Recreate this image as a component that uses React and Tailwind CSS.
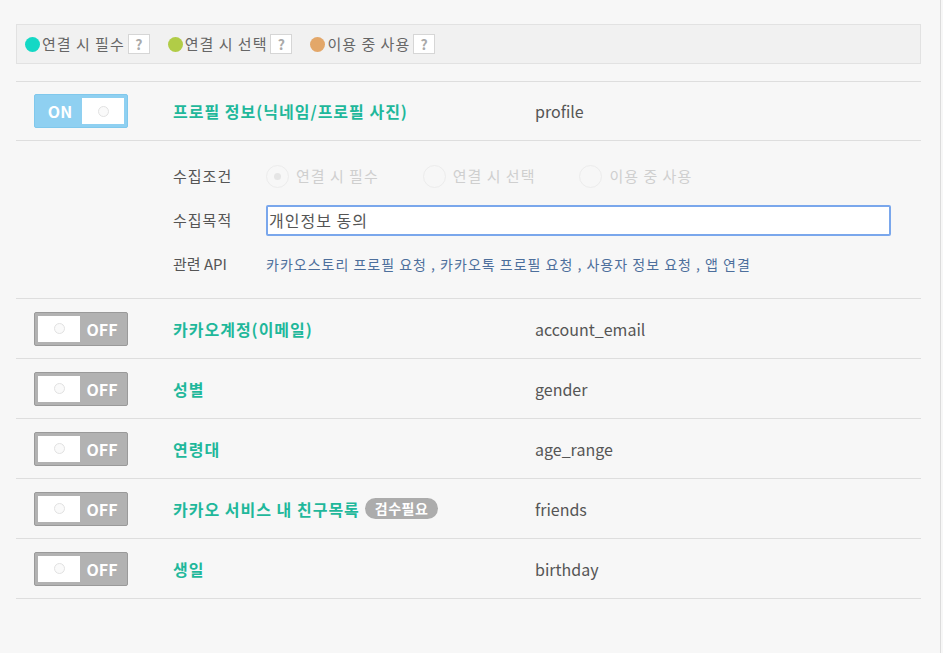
import { useState } from 'react';

const FONT = { fontFamily: '"Noto Sans CJK KR", "Noto Sans", sans-serif' };

const legend = [
  { label: '연결 시 필수', color: 'bg-[#14d8c5]' },
  { label: '연결 시 선택', color: 'bg-[#b1cc47]' },
  { label: '이용 중 사용', color: 'bg-[#e3a769]' },
];

const items = [
  { name: '카카오계정(이메일)', key: 'account_email' },
  { name: '성별', key: 'gender' },
  { name: '연령대', key: 'age_range' },
  { name: '카카오 서비스 내 친구목록', key: 'friends', badge: '검수필요' },
  { name: '생일', key: 'birthday' },
];

function Toggle({ on }) {
  return (
    <div
      className={`flex items-center w-[94px] h-[34px] rounded-[2px] border p-[3px] ${
        on ? 'bg-[#8fd0f1] border-[#80c8ec]' : 'bg-[#b2b2b2] border-[#9a9a9a] flex-row-reverse'
      }`}
    >
      <span className="flex-1 text-center text-white font-bold text-[16px] leading-none">{on ? 'ON' : 'OFF'}</span>
      <span className="w-[42px] h-[26px] bg-white flex items-center justify-center">
        <span className="w-[11px] h-[11px] rounded-full border border-[#e2e2e2] bg-[#fafafa]" />
      </span>
    </div>
  );
}

function Radio({ label, checked }) {
  return (
    <div className="flex items-center gap-[7px] text-[15px] tracking-[1px] text-[#cfcfcf]">
      <span className="w-[23px] h-[23px] rounded-full border border-[#ececec] bg-[#f7f7f7] flex items-center justify-center">
        {checked && <span className="w-[7px] h-[7px] rounded-full bg-[#e5e5e5]" />}
      </span>
      {label}
    </div>
  );
}

export default function App() {
  const [purpose, setPurpose] = useState('개인정보 동의');

  return (
    <div style={FONT} className="min-h-[653px] w-[943px] bg-[#f7f7f7] text-[#555]">
      <div className="w-[941px] min-h-[653px] border-r border-[#dcdcdc] pt-[24px] pl-[16px] pr-[19px]">
        {/* legend */}
        <div className="h-[40px] bg-[#f1f1f1] border border-[#e2e2e2] flex items-center pl-[8px] gap-[18px]">
          {legend.map((l) => (
            <div key={l.label} className="flex items-center">
              <span className={`w-[15px] h-[15px] rounded-full ${l.color}`} />
              <span className="ml-[2px] text-[15px] tracking-[1px] text-[#666]">{l.label}</span>
              <span className="ml-[3px] w-[22px] h-[20px] bg-white border border-[#d6d6d6] flex items-center justify-center text-[14px] font-bold text-[#aaa]">
                ?
              </span>
            </div>
          ))}
        </div>

        <div className="mt-[17px] border-t border-[#dedede]">
          {/* profile row */}
          <div className="h-[59px] flex items-center border-b border-[#dedede]">
            <div className="w-[157px] pl-[18px]">
              <Toggle on />
            </div>
            <div className="w-[362px] text-[16px] tracking-[1px] font-bold text-[#1fb89b]">프로필 정보(닉네임/프로필 사진)</div>
            <div className="text-[16px] text-[#555]">profile</div>
          </div>

          {/* details */}
          <div className="h-[158px] border-b border-[#dedede] pl-[157px] pt-[20px] flex flex-col gap-[14px] text-[15px]">
            <div className="flex items-center h-[30px]">
              <span className="w-[93px] tracking-[1px] text-[#555]">수집조건</span>
              <div className="flex gap-[44px]">
                <Radio label="연결 시 필수" checked />
                <Radio label="연결 시 선택" />
                <Radio label="이용 중 사용" />
              </div>
            </div>
            <div className="flex items-center h-[30px]">
              <span className="w-[93px] tracking-[1px] text-[#555]">수집목적</span>
              <input
                autoFocus
                value={purpose}
                onChange={(e) => setPurpose(e.target.value)}
                className="w-[625px] h-[31px] bg-white border-2 border-[#7aa7ec] rounded-[2px] px-[1px] text-[16px] tracking-[1px] text-[#555] outline-none"
                style={FONT}
              />
            </div>
            <div className="flex items-center h-[30px]">
              <span className="w-[93px] text-[#555]">관련 API</span>
              <span className="text-[14px] tracking-[1px] text-[#4d6f9c]">
                카카오스토리 프로필 요청 , 카카오톡 프로필 요청 , 사용자 정보 요청 , 앱 연결
              </span>
            </div>
          </div>

          {items.map((it) => (
            <div key={it.key} className="h-[60px] flex items-center border-b border-[#dedede]">
              <div className="w-[157px] pl-[18px]">
                <Toggle />
              </div>
              <div className="w-[362px] flex items-center text-[16px] tracking-[1px] font-bold text-[#1fb89b]">
                {it.name}
                {it.badge && (
                  <span className="ml-[5px] h-[21px] px-[10px] rounded-full bg-[#acacac] text-white text-[14px] tracking-[0.5px] font-bold flex items-center">
                    {it.badge}
                  </span>
                )}
              </div>
              <div className="text-[16px] text-[#555]">{it.key}</div>
            </div>
          ))}
        </div>
      </div>
    </div>
  );
}
